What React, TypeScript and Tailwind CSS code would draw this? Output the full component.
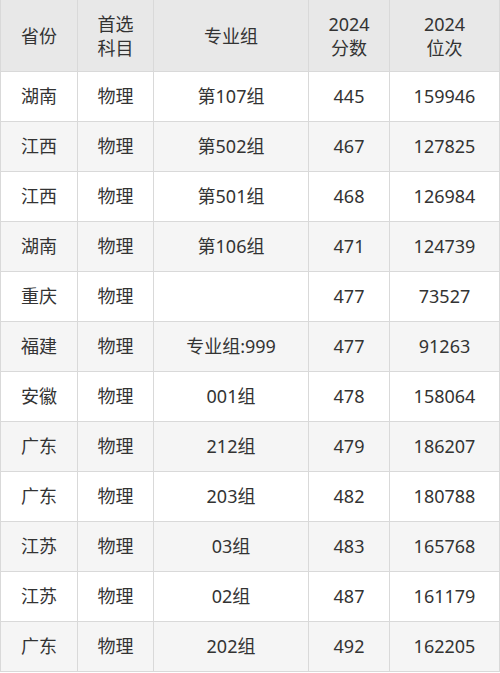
import React from "react";

interface Row {
  province: string;
  subject: string;
  group: string;
  score: string;
  rank: string;
}

const rows: Row[] = [
  { province: "湖南", subject: "物理", group: "第107组", score: "445", rank: "159946" },
  { province: "江西", subject: "物理", group: "第502组", score: "467", rank: "127825" },
  { province: "江西", subject: "物理", group: "第501组", score: "468", rank: "126984" },
  { province: "湖南", subject: "物理", group: "第106组", score: "471", rank: "124739" },
  { province: "重庆", subject: "物理", group: "", score: "477", rank: "73527" },
  { province: "福建", subject: "物理", group: "专业组:999", score: "477", rank: "91263" },
  { province: "安徽", subject: "物理", group: "001组", score: "478", rank: "158064" },
  { province: "广东", subject: "物理", group: "212组", score: "479", rank: "186207" },
  { province: "广东", subject: "物理", group: "203组", score: "482", rank: "180788" },
  { province: "江苏", subject: "物理", group: "03组", score: "483", rank: "165768" },
  { province: "江苏", subject: "物理", group: "02组", score: "487", rank: "161179" },
  { province: "广东", subject: "物理", group: "202组", score: "492", rank: "162205" },
];

const cell = "flex items-center justify-center text-center border-r border-b border-[#d9d9d9]";

const App: React.FC = () => {
  return (
    <div
      className="w-[499px] bg-white text-[#333] text-[18px] border-l border-[#d9d9d9]"
      style={{ fontFamily: '"Noto Sans", "Noto Sans CJK SC", sans-serif' }}
    >
      {/* header */}
      <div className="grid grid-cols-[77px_76px_155px_81px_110px] h-[72px] bg-[#e8e8e8] leading-[24px]">
        <div className={cell}>省份</div>
        <div className={cell}>
          首选
          <br />
          科目
        </div>
        <div className={cell}>专业组</div>
        <div className={cell}>
          2024
          <br />
          分数
        </div>
        <div className={cell}>
          2024
          <br />
          位次
        </div>
      </div>

      {/* body */}
      {rows.map((r, i) => (
        <div
          key={i}
          className={`grid grid-cols-[77px_76px_155px_81px_110px] h-[50px] ${
            i % 2 === 1 ? "bg-[#f5f5f5]" : "bg-white"
          }`}
        >
          <div className={cell}>{r.province}</div>
          <div className={cell}>{r.subject}</div>
          <div className={cell}>{r.group}</div>
          <div className={cell}>{r.score}</div>
          <div className={cell}>{r.rank}</div>
        </div>
      ))}
    </div>
  );
};

export default App;
